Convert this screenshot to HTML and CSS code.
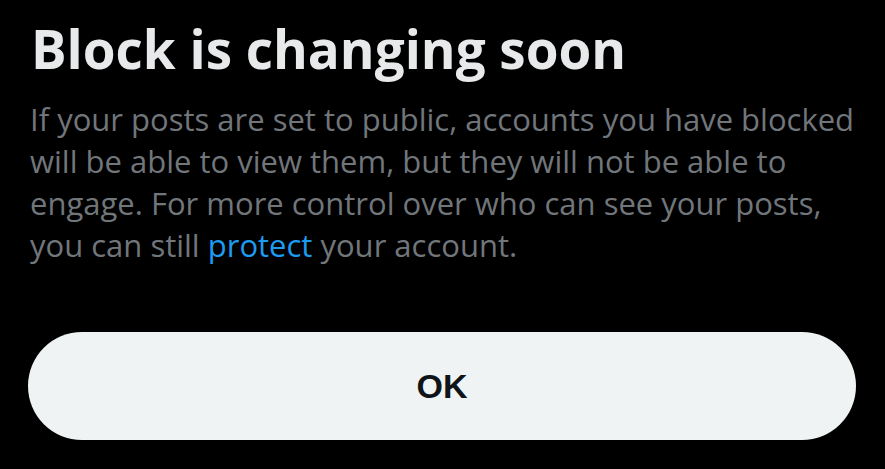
FILE: index.html
```html
<!DOCTYPE html>
<html lang="en">
<head>
    <meta charset="UTF-8">
    <meta name="viewport" content="width=device-width, initial-scale=1.0">
    <title>Block is changing soon</title>
    <link rel="stylesheet" href="styles.css">
</head>
<body>
    <div class="sheet">
        <h1 class="sheet-title">Block is changing soon</h1>
        <p class="sheet-text">
            If your posts are set to public, accounts you have blocked<br>
            will be able to view them, but they will not be able to<br>
            engage. For more control over who can see your posts,<br>
            you can still <a href="#" class="link">protect</a> your account.
        </p>
        <button class="ok-button">OK</button>
    </div>
</body>
</html>
```

FILE: styles.css
```css
body {
    margin: 0;
    padding: 0;
    background-color: #000;
    font-family: "Open Sans", "Noto Sans", sans-serif;
}
.sheet {
    padding: 17px 29px 0 28px;
}
.sheet-title {
    margin: 0 0 0 3px;
    font-size: 53px;
    font-weight: 700;
    color: #e7e9ea;
    line-height: 64px;
}
.sheet-text {
    margin: 17px 0 0 2px;
    font-size: 31px;
    line-height: 42px;
    color: #71767b;
    white-space: nowrap;
}
.link {
    color: #1d9bf0;
    text-decoration: none;
}
.ok-button {
    display: block;
    width: 100%;
    height: 108px;
    margin-top: 66px;
    border: none;
    border-radius: 54px;
    background-color: #eff3f4;
    color: #0f1419;
    font-family: "Liberation Sans", Arial, sans-serif;
    font-weight: 700;
    font-size: 34px;
    cursor: pointer;
}
```
